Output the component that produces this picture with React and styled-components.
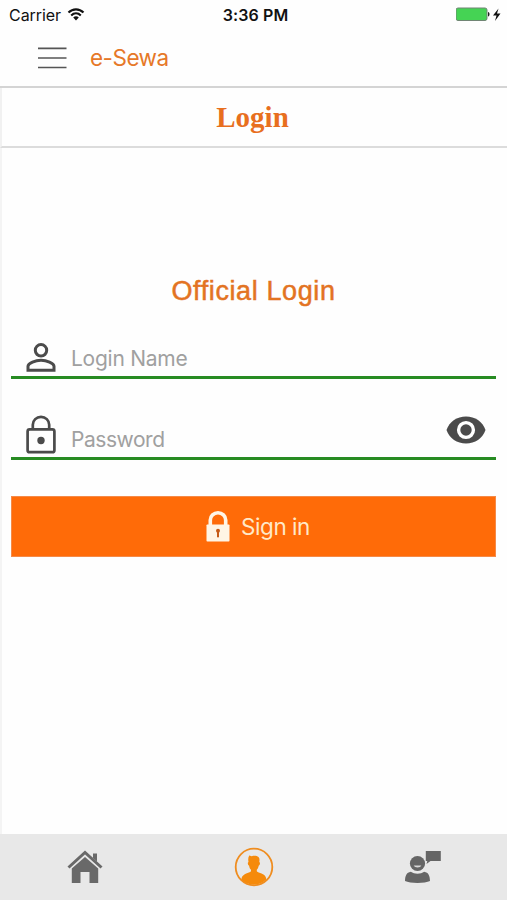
import { useState } from 'react';
import styled, { createGlobalStyle } from 'styled-components';

const StatusBar = () => (
  <StatusWrapper>
    <Carrier>
      <span>Carrier</span>
      <svg width="18" height="14" viewBox="0 0 18 14" fill="none">
        <path d="M1.5 4.6C5.7.3 12.3.3 16.5 4.6" stroke="#111" strokeWidth="2.1" />
        <path d="M4.2 7.4C7 4.7 11 4.7 13.8 7.4" stroke="#111" strokeWidth="2.1" />
        <path d="M6.2 9.500C7.9 7.900 10.1 7.900 11.8 9.500L9 12.400z" fill="#111" />
      </svg>
    </Carrier>
    <Clock>3:36 PM</Clock>
    <Battery>
      <svg width="46" height="16" viewBox="0 0 46 16">
        <rect x="0" y="1" width="31" height="12.5" rx="2" fill="#45d354" stroke="#708574" />
        <path d="M32 5c2 .3 2 4.200 0 4.500z" fill="#222" />
        <path d="M42.500 1.500L37 8.500h3.500l-1.500 5.500L44.500 6.500H41z" fill="#111" />
      </svg>
    </Battery>
  </StatusWrapper>
);

const MenuIcon = () => (
  <svg width="29" height="24" viewBox="0 0 29 24" stroke="#555" strokeWidth="1.700">
    <path d="M0 2.300h28.500M0 12h28.500M0 21.500h28.500" />
  </svg>
);

const PersonIcon = () => (
  <svg width="30" height="30" viewBox="0 0 30 30" fill="none" stroke="#4b4b4b" strokeWidth="3">
    <circle cx="15" cy="7.300" r="5.700" />
    <path d="M2 27.300v-4c0-3.400 7.600-6 13-6s13 2.600 13 6v4z" />
  </svg>
);

const LockIcon = () => (
  <svg width="30" height="39" viewBox="0 0 30 39" fill="none" stroke="#4b4b4b" strokeWidth="2.700">
    <rect x="1.600" y="14.400" width="26.800" height="22.800" rx="2" />
    <path d="M6.800 14V9.800a8.200 8 0 0 1 16.400 0V14" />
    <circle cx="15" cy="25.500" r="3.700" fill="#4b4b4b" stroke="none" />
  </svg>
);

const EyeIcon = () => (
  <svg width="40" height="28" viewBox="0 0 40 28">
    <path d="M.5 14C3.500 5.500 11 .5 20 .5S36.500 5.500 39.500 14C36.500 22.500 29 27.500 20 27.500S3.500 22.500.5 14z" fill="#4b4b4b" />
    <circle cx="20" cy="14" r="7.400" fill="#4b4b4b" stroke="#fff" strokeWidth="3.400" />
  </svg>
);

const SolidLockIcon = () => (
  <svg width="24" height="32" viewBox="0 0 24 32">
    <path d="M4.300 15V9a7.700 7.200 0 0 1 15.400 0v6" fill="none" stroke="#fff5e5" strokeWidth="3.600" />
    <rect x="0.500" y="13.500" width="23" height="17" rx="0.800" fill="#fff5e5" />
    <circle cx="12" cy="19.700" r="2" fill="#c65b18" />
    <rect x="11" y="20" width="2" height="6.300" fill="#c65b18" />
  </svg>
);

const HomeIcon = () => (
  <svg width="36" height="36" viewBox="0 0 36 36" fill="#696969">
    <path d="M1.500 18.500L18 3.500l16.500 15" fill="none" stroke="#696969" strokeWidth="3" />
    <path d="M26 4.500h4v8l-4-3.500z" />
    <path d="M4.800 19.500L18 8l13.200 11.500V34H22.500V23h-9v11H4.800z" />
  </svg>
);

const UserIcon = () => (
  <svg width="40" height="40" viewBox="0 0 40 40">
    <circle cx="20" cy="20" r="18.300" fill="none" stroke="#ef8d20" strokeWidth="1.800" />
    <path
      d="M15.200 8.600l2.600.7c2-.7 5-.7 6.700.8 1.300 1.300 1 3.400.8 5 1.200.2.7 3.300-.6 3.700-.4 2-1 3-1.900 4v1.500c1.700 2 8 2 9.200 6.500l.3 1.800a18 18 0 0 1-25 0l.4-1.800C9.200 26.200 15 26.200 17 24.200v-1.500c-1-1-1.600-2-1.900-4-1.300-.4-1.800-3.500-.6-3.700-.4-2-.5-4 .7-6.400z"
      fill="#f58a0b"
    />
  </svg>
);

const SupportIcon = () => (
  <svg width="38" height="34" viewBox="0 0 38 34" fill="#656565">
    <circle cx="13.500" cy="13.500" r="7.600" />
    <path d="M9.700 15.500h7.600c-.8 2.600-6.600 2.600-7.600 0z" fill="#d8d8d8" />
    <path d="M1 31c.2-5.600 1.400-8.400 5.800-9.300 3.600 2.600 9.800 2.600 13.400 0 4.400.9 5.600 3.700 5.800 9.300-5 2.500-20 2.500-25 0z" />
    <path d="M21.800 1h15v10H26.500l-4 3 .8-3h-1.500z" />
  </svg>
);

const App = () => {
  const [showPassword, setShowPassword] = useState(false);

  return (
    <Screen>
      <GlobalStyle />
      <StatusBar />
      <Header>
        <MenuButton aria-label="Menu">
          <MenuIcon />
        </MenuButton>
        <Brand>e-Sewa</Brand>
      </Header>
      <PageTitle>Login</PageTitle>
      <Content>
        <FormTitle>Official Login</FormTitle>
        <Field>
          <PersonIcon />
          <Input placeholder="Login Name" $spacing="-0.25px" />
        </Field>
        <Field $tall>
          <LockIcon />
          <Input
            type={showPassword ? 'text' : 'password'}
            placeholder="Password"
            $spacing="-0.45px"
          />
          <EyeButton
            aria-label="Show password"
            onClick={() => setShowPassword(!showPassword)}
          >
            <EyeIcon />
          </EyeButton>
        </Field>
        <SignInButton>
          <SolidLockIcon />
          <span>Sign in</span>
        </SignInButton>
      </Content>
      <TabBar>
        <Tab aria-label="Home">
          <HomeIcon />
        </Tab>
        <Tab aria-label="Account">
          <UserIcon />
        </Tab>
        <Tab aria-label="Support">
          <SupportIcon />
        </Tab>
      </TabBar>
    </Screen>
  );
};

const GlobalStyle = createGlobalStyle`
  * {
    box-sizing: border-box;
  }

  body {
    margin: 0;
    background: #fefefe;
    font-family: Inter, 'Liberation Sans', sans-serif;
  }

  button {
    border: 0;
    padding: 0;
    background: none;
    font-family: inherit;
  }

  svg {
    display: block;
    flex-shrink: 0;
  }
`;

const Screen = styled.div`
  width: 100%;
  height: 900px;
  display: flex;
  flex-direction: column;
  background: #fefefe;
`;

const StatusWrapper = styled.div`
  height: 29px;
  display: grid;
  grid-template-columns: 1fr auto 1fr;
  align-items: center;
  padding: 0 5px 0 9px;
  color: #111;
`;

const Carrier = styled.div`
  display: flex;
  align-items: center;
  gap: 6px;
  font-size: 16px;
  letter-spacing: -0.05px;
`;

const Clock = styled.div`
  font-size: 16px;
  font-weight: 600;
  letter-spacing: 0.1px;
`;

const Battery = styled.div`
  display: flex;
  justify-content: flex-end;
`;

const Header = styled.header`
  height: 59px;
  display: flex;
  align-items: center;
  gap: 23px;
  padding-left: 38px;
  border-bottom: 2px solid #d4d4d4;
`;

const MenuButton = styled.button`
  width: 29px;
`;

const Brand = styled.div`
  font-size: 22.500px;
  letter-spacing: -0.5px;
  color: #e67828;
`;

const PageTitle = styled.h1`
  height: 60px;
  margin: 0;
  padding-right: 4px;
  display: flex;
  align-items: center;
  justify-content: center;
  border-bottom: 2px solid #dcdcdc;
  border-left: 2px solid #f1f1f1;
  font-family: 'Liberation Serif', serif;
  font-size: 29px;
  font-weight: bold;
  color: #e86f1e;
`;

const Content = styled.main`
  flex: 1;
  padding: 126px 11px 0 9px;
  border-left: 2px solid #f4f4f4;
`;

const FormTitle = styled.h2`
  margin: 0;
  height: 34px;
  line-height: 34px;
  text-align: center;
  font-family: 'Liberation Sans', sans-serif;
  font-size: 27px;
  font-weight: normal;
  letter-spacing: 0.6px;
  color: #e37322;
  -webkit-text-stroke: 0.5px #e37322;
`;

const Field = styled.div`
  height: ${(props) => (props.$tall ? '81px' : '71px')};
  display: flex;
  align-items: flex-end;
  gap: 15px;
  padding: 0 10px 3px 15px;
  border-bottom: 3px solid #278b22;
`;

const Input = styled.input`
  flex: 1;
  min-width: 0;
  height: 29px;
  padding: 0;
  border: 0;
  outline: none;
  background: transparent;
  font-family: inherit;
  font-size: 21px;
  letter-spacing: ${(props) => props.$spacing};

  &::placeholder {
    color: #a0a0a0;
    opacity: 1;
  }
`;

const EyeButton = styled.button`
  margin-bottom: 10px;
`;

const SignInButton = styled.button`
  width: 100%;
  height: 61px;
  margin-top: 36px;
  display: flex;
  align-items: center;
  justify-content: center;
  gap: 11px;
  padding-left: 9px;
  background: #ff6b08;
  border: 1px solid #f58a48;
  color: #ffe9c8;
  font-size: 22.500px;
  letter-spacing: -0.45px;
`;

const TabBar = styled.nav`
  height: 66px;
  display: grid;
  grid-template-columns: repeat(3, 1fr);
  background: #e8e8e8;
`;

const Tab = styled.button`
  display: flex;
  align-items: center;
  justify-content: center;
`;

export default App;
